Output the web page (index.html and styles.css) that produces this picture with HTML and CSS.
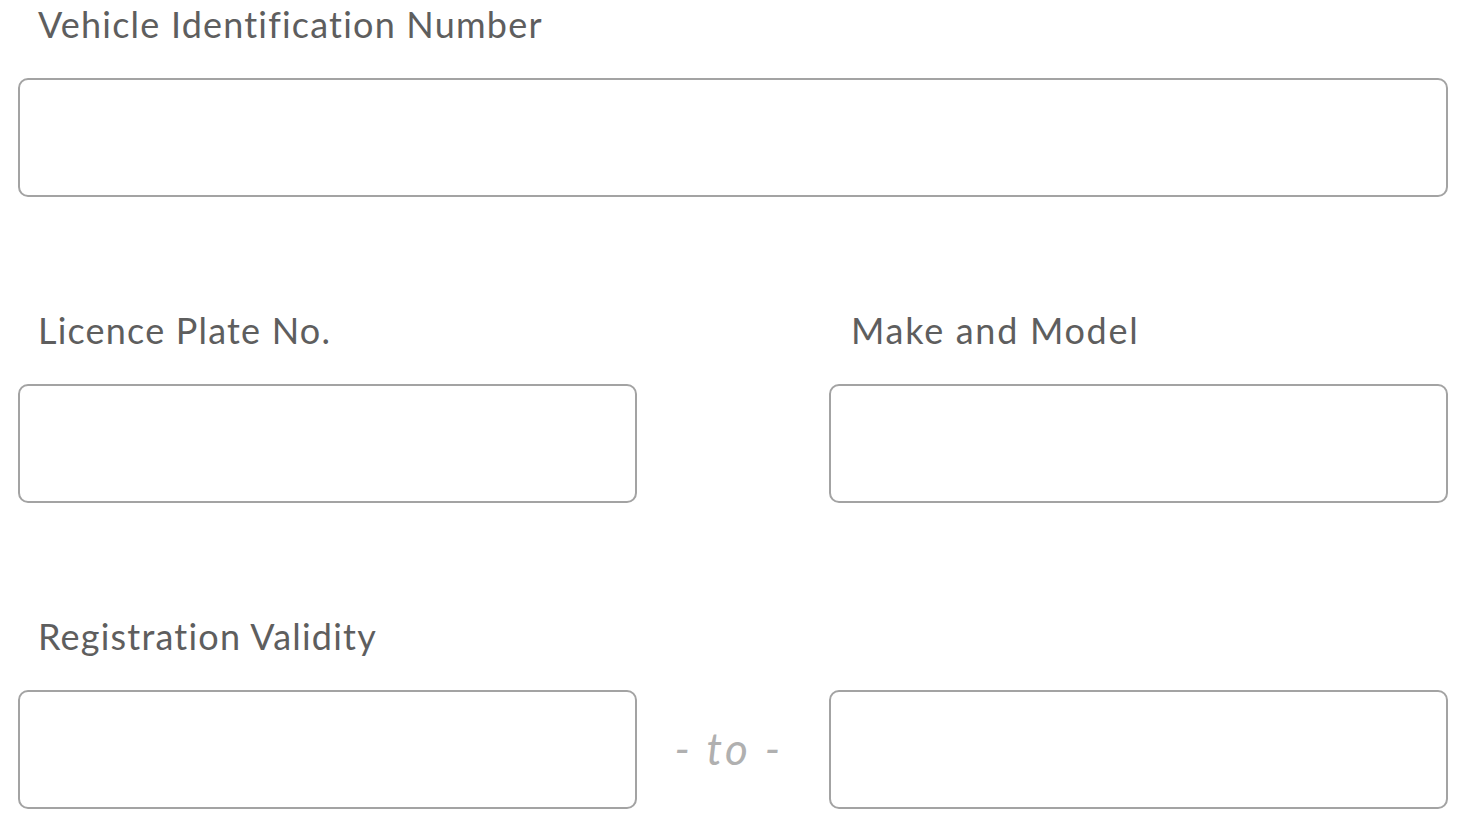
FILE: index.html
```html
<!DOCTYPE html>
<html lang="en">
<head>
<meta charset="utf-8">
<title>Vehicle Details</title>
<link rel="stylesheet" href="styles.css">
</head>
<body>
<form class="form">
  <div class="group">
    <label class="label" for="vin">Vehicle Identification Number</label>
    <input class="field" id="vin" type="text">
  </div>
  <div class="group row">
    <div class="col">
      <label class="label" for="plate">Licence Plate No.</label>
      <input class="field" id="plate" type="text">
    </div>
    <div class="spacer"></div>
    <div class="col">
      <label class="label label-alt" for="make">Make and Model</label>
      <input class="field" id="make" type="text">
    </div>
  </div>
  <div class="group">
    <label class="label" for="from">Registration Validity</label>
    <div class="range">
      <input class="field" id="from" type="text">
      <span class="to">- to -</span>
      <input class="field" id="to" type="text">
    </div>
  </div>
</form>
</body>
</html>
```

FILE: styles.css
```css
html, body {
  margin: 0;
  padding: 0;
  background: #ffffff;
}

.form {
  display: flex;
  flex-direction: column;
  gap: 111px;
  padding: 2px 14px 0 18px;
  font-family: Lato, "Open Sans", "Liberation Sans", sans-serif;
  font-variant-ligatures: none;
}

.group {
  display: flex;
  flex-direction: column;
}

.row {
  flex-direction: row;
}

.col {
  display: flex;
  flex-direction: column;
  width: 619px;
}

.spacer {
  width: 192px;
  flex: none;
}

.label {
  display: block;
  font-size: 36px;
  line-height: 44px;
  height: 44px;
  letter-spacing: 1.2px;
  color: #5e5e5e;
  padding-left: 20px;
  margin-bottom: 32px;
}

.label-alt {
  padding-left: 22px;
  letter-spacing: 1.7px;
}

.field {
  box-sizing: border-box;
  display: block;
  width: 100%;
  height: 119px;
  margin: 0;
  border: 2px solid #a3a3a3;
  border-radius: 10px;
  background: #ffffff;
  outline: none;
}

.range {
  display: flex;
  align-items: center;
}

.range .field {
  width: 619px;
  flex: none;
}

.to {
  width: 192px;
  flex: none;
  box-sizing: border-box;
  text-align: center;
  font-style: italic;
  font-size: 44px;
  letter-spacing: 3.3px;
  color: #b0b0b0;
  padding: 0 8px 4px 0;
}
```
